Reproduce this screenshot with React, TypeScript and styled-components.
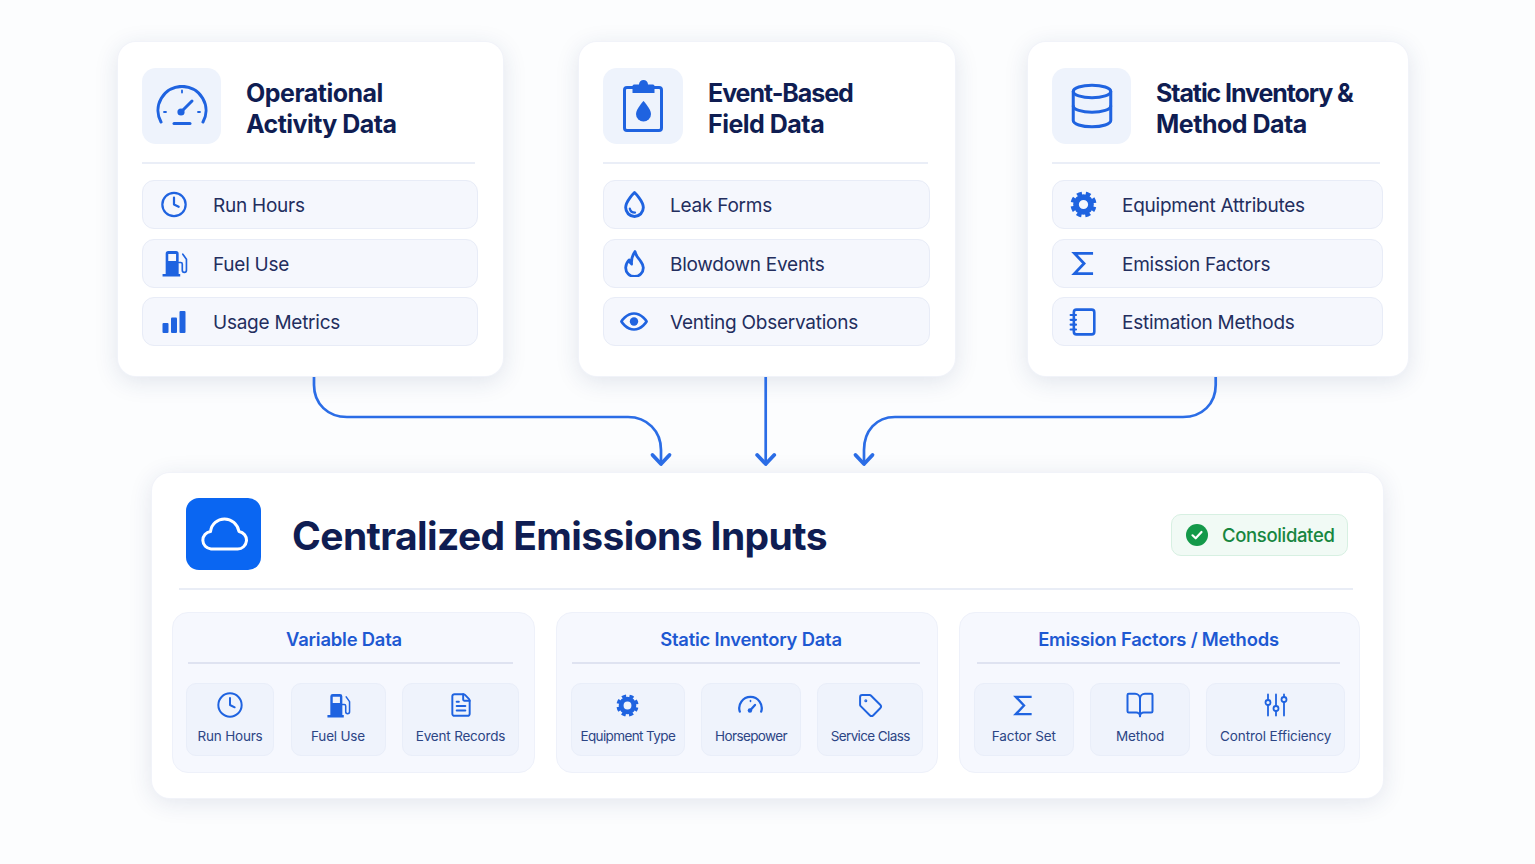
import React from 'react';
import styled, { createGlobalStyle } from 'styled-components';
import { BookOpen, Clock, Database, FileText, Tag } from 'lucide-react';

const blue = '#1f63e0';
const FONT = '"Inter", "Noto Sans", sans-serif';

const GlobalStyle = createGlobalStyle`
  html, body {
    margin: 0;
    background: #fcfdfe;
    font-family: ${FONT};
  }
  * { box-sizing: border-box; }
`;

const Page = styled.div`
  width: 1535px;
  height: 864px;
  padding-top: 42px;
  overflow: hidden;
`;

const TopRow = styled.div`
  display: flex;
  padding-left: 118px;
`;

const SourceCard = styled.section<{ $width: number; $after: number; $padRight: number }>`
  width: ${({ $width }) => $width}px;
  height: 334px;
  margin-right: ${({ $after }) => $after}px;
  padding: 26px ${({ $padRight }) => $padRight}px 0 24px;
  background: #fff;
  border-radius: 18px;
  box-shadow: 0 0 0 1px #f1f3f9, 0 5px 24px rgba(32, 52, 105, 0.13);
`;

const CardHead = styled.div`
  display: flex;
  align-items: center;
  gap: 25px;
  height: 76px;
`;

const IconBox = styled.div<{ $width: number }>`
  display: flex;
  align-items: center;
  justify-content: center;
  width: ${({ $width }) => $width}px;
  height: 76px;
  background: #eef3fc;
  border-radius: 14px;
  color: ${blue};
`;

const CardTitle = styled.h2`
  margin: 0;
  padding-top: 5px;
  font-size: 25px;
  line-height: 31px;
  font-weight: 700;
  letter-spacing: -0.5px;
  color: #0f1d52;
`;

const TitleLine = styled.span<{ $track: number }>`
  display: block;
  letter-spacing: ${({ $track }) => $track}px;
`;

const CardRule = styled.hr<{ $inset: number }>`
  height: 2px;
  margin: 18px ${({ $inset }) => $inset}px 16px 0;
  border: 0;
  background: #eaeef7;
`;

const RowList = styled.div`
  display: flex;
  flex-direction: column;
  gap: 9.5px;
`;

const Row = styled.div<{ $gap: number; $pad: number }>`
  display: flex;
  align-items: center;
  gap: ${({ $gap }) => $gap}px;
  height: 49px;
  padding-left: ${({ $pad }) => $pad}px;
  background: #f5f7fd;
  border: 1px solid #e8ecf7;
  border-radius: 12px;
  font-size: 19px;
  letter-spacing: -0.25px;
  color: #232e5e;
`;

const RowIcon = styled.span`
  display: flex;
  align-items: center;
  justify-content: center;
  width: 28px;
  color: ${blue};
`;

const RowLabel = styled.span`
  padding-top: 2px;
`;

const Arrows = styled.svg`
  display: block;
  width: 1535px;
  height: 97px;
`;

const Hub = styled.section`
  width: 1231px;
  height: 325px;
  margin-left: 152px;
  padding: 25px 23px 0 20px;
  background: #fff;
  border-radius: 18px;
  box-shadow: 0 0 0 1px #f1f3f9, 0 4px 24px rgba(32, 52, 105, 0.12);
`;

const HubHead = styled.div`
  display: flex;
  align-items: center;
  height: 72px;
  padding: 0 12px 0 14px;
`;

const CloudBox = styled.div`
  display: flex;
  align-items: center;
  justify-content: center;
  width: 75px;
  height: 72px;
  margin-right: 31px;
  background: #0a66f2;
  border-radius: 13px;
`;

const HubTitle = styled.h1`
  flex: 1;
  margin: 3px 0 0;
  font-size: 39px;
  font-weight: 700;
  letter-spacing: -0.6px;
  color: #0f1d52;
`;

const Badge = styled.div`
  display: flex;
  align-items: center;
  gap: 14px;
  width: 177px;
  height: 42px;
  margin-top: 2px;
  padding-left: 14px;
  background: #f1faf5;
  border: 1px solid #d7f0e2;
  border-radius: 10px;
  font-size: 18.5px;
  font-weight: 500;
  letter-spacing: -0.35px;
  color: #17863f;
`;

const HubRule = styled.hr`
  height: 2px;
  margin: 18px 7px 22px 7px;
  border: 0;
  background: #e9edf6;
`;

const GroupRow = styled.div`
  display: flex;
  gap: 21px;
`;

const Group = styled.div<{ $width: number; $padLeft: number }>`
  width: ${({ $width }) => $width}px;
  height: 161px;
  padding: 0 14px 0 ${({ $padLeft }) => $padLeft}px;
  background: #f6f8fe;
  border: 1px solid #eef1fa;
  border-radius: 16px;
`;

const GroupTitle = styled.h3<{ $shift: number }>`
  margin: 0;
  height: 49px;
  line-height: 53px;
  text-align: center;
  transform: translateX(${({ $shift }) => $shift}px);
  font-size: 18.4px;
  font-weight: 600;
  letter-spacing: -0.2px;
  color: #1e59d2;
`;

const GroupRule = styled.hr<{ $left: number; $right: number }>`
  height: 2px;
  margin: 0 ${({ $right }) => $right}px 19px ${({ $left }) => $left}px;
  border: 0;
  background: #dfe3f1;
`;

const Tiles = styled.div<{ $track: number }>`
  display: flex;
  gap: 16.5px;
  letter-spacing: ${({ $track }) => $track}px;
`;

const Tile = styled.div<{ $width: number }>`
  display: flex;
  flex-direction: column;
  align-items: center;
  width: ${({ $width }) => $width}px;
  height: 73px;
  padding-top: 7px;
  background: #eff3fc;
  border: 1px solid #e9eef9;
  border-radius: 10px;
  font-size: 13.5px;
  color: #2c4585;
`;

const TileIcon = styled.span`
  display: flex;
  align-items: center;
  justify-content: center;
  height: 28px;
  margin-bottom: 9px;
  color: ${blue};
`;

type IconProps = { size: number };

const Gauge = () => (
  <svg width="52" height="42" viewBox="0 0 52 42" fill="none" stroke={blue} strokeWidth="3" strokeLinecap="round">
    <path d="M5 37A24 24 0 1 1 47 37" />
    <path d="M26 5.5v2M8 27h2M42 27h2" strokeWidth="1.8" />
    <path d="M26 26 36 16" strokeWidth="3" />
    <circle cx="25" cy="27" r="3.6" fill={blue} stroke="none" />
    <path d="M18 38.5h16" />
  </svg>
);

const SmallGauge = ({ size }: IconProps) => (
  <svg width={size} height={size} viewBox="0 0 24 24" fill="none" stroke={blue} strokeWidth="2" strokeLinecap="round">
    <path d="M2.5 17.5A10 10 0 1 1 21.5 17.5" />
    <path d="M12 7.5v1" strokeWidth="1.4" />
    <path d="M12 16 16 11.5" />
    <circle cx="11.5" cy="16.5" r="2" fill={blue} stroke="none" />
  </svg>
);

const ClipDrop = () => (
  <svg width="44" height="54" viewBox="0 0 44 54" fill="none">
    <rect x="3.5" y="8.5" width="37" height="43" rx="2.5" stroke={blue} strokeWidth="3" />
    <path d="M13 5.5h5a4.5 4.5 0 0 1 9 0h5a1.5 1.5 0 0 1 1.5 1.5v7h-22V7a1.5 1.5 0 0 1 1.5-1.5Z" fill={blue} />
    <path d="M22.5 22C22.5 22 15 30 15 35a7.5 7.5 0 0 0 15 0C30 30 22.5 22 22.5 22Z" fill={blue} />
  </svg>
);

const Bars = ({ size }: IconProps) => (
  <svg width={size} height={size} viewBox="0 0 24 24" fill={blue}>
    <rect x="0.5" y="13" width="6" height="10" rx="1" />
    <rect x="9" y="7.5" width="6" height="15.5" rx="1" />
    <rect x="17.5" y="1" width="6" height="22" rx="1" />
  </svg>
);

const Pump = ({ size }: IconProps) => (
  <svg width={size} height={size} viewBox="0 0 26 26" fill="none">
    <path
      fillRule="evenodd"
      fill={blue}
      d="M4.5 3.5A2.5 2.5 0 0 1 7 1h7.5A2.5 2.5 0 0 1 17 3.5V23h1.5v2.5H1.5V23h3ZM7 3.8h7.5v6.7H7Z"
    />
    <path d="M17 12h2a1.5 1.5 0 0 1 1.5 1.500v6a2 2 0 0 0 4 0V9L21 4" stroke={blue} strokeWidth="1.6" strokeLinecap="round" />
  </svg>
);

const Drop = ({ size }: IconProps) => (
  <svg width={size} height={size} viewBox="0 0 26 26" fill="none" stroke={blue} strokeWidth="2.8" strokeLinecap="round" strokeLinejoin="round">
    <path d="M13 1.500C13 1.500 4.500 9.500 4.500 16a8.500 8.500 0 0 0 17 0C21.500 9.500 13 1.500 13 1.500Z" />
    <path d="M8.500 17c.5 2.500 2.500 3.800 5 3.800" strokeWidth="2.200" />
  </svg>
);

const FlameMark = ({ size }: IconProps) => (
  <svg width={size} height={size} viewBox="0 0 26 26" fill="none" stroke={blue} strokeWidth="2.700" strokeLinejoin="round">
    <path d="M13.500 1.500c.8 4.500 3.500 6.500 5.500 9.500 1.400 2 2.500 3.700 2.500 6a8.500 8.500 0 0 1-17 0c0-3.300 1.700-5.700 3.300-7.500.3 2 1 3.300 2.400 4C9.800 9.800 11 5 13.500 1.500Z" />
  </svg>
);

const Eye = ({ size }: IconProps) => (
  <svg width={size} height={size} viewBox="0 0 30 30" fill="none" stroke={blue} strokeWidth="2.8" strokeLinejoin="round">
    <path d="M1.500 15S6.500 6.500 15 6.500 28.500 15 28.500 15 23.500 23.500 15 23.500 1.500 15 1.500 15Z" />
    <circle cx="15" cy="15" r="4.500" fill={blue} stroke="none" />
  </svg>
);

const Gear = ({ size }: IconProps) => (
  <svg width={size} height={size} viewBox="0 0 26 26" fill="none" stroke={blue}>
    <circle cx="13" cy="13" r="7.200" strokeWidth="5.500" />
    <circle cx="13" cy="13" r="10.500" strokeWidth="4" strokeDasharray="4.700 3.547" strokeDashoffset="2.350" transform="rotate(22.500 13 13)" />
  </svg>
);

const SigmaMark = ({ size }: IconProps) => (
  <svg width={size} height={size} viewBox="0 0 24 24" fill="none" stroke={blue} strokeWidth="2.500">
    <path d="M20.500 3H4l8.500 9L4 21h16.500" />
  </svg>
);

const Notebook = ({ size }: IconProps) => (
  <svg width={size} height={size} viewBox="0 0 26 26" fill="none" stroke={blue} strokeWidth="2.400" strokeLinecap="round">
    <rect x="4.500" y="1.500" width="19" height="23" rx="2.500" />
    <path d="M1.500 6.500h5M1.500 11h5M1.500 15.500h5M1.500 20h5" strokeWidth="2" />
  </svg>
);

const CloudMark = () => (
  <svg width="48" height="34" viewBox="0 0 48 34" fill="none" stroke="#fff" strokeWidth="3" strokeLinejoin="round">
    <path d="M11 32H37.500a8.800 8.800 0 0 0 1.500-17.500C37.500 7 31.500 2 24.500 2 17.500 2 11.500 7 10.500 14.500A8.800 8.800 0 0 0 11 32Z" />
  </svg>
);

const Check = () => (
  <svg width="22" height="22" viewBox="0 0 22 22" fill="none">
    <circle cx="11" cy="11" r="11" fill="#14994a" />
    <path d="M6.500 11.300 9.700 14.300 15.500 8" stroke="#fff" strokeWidth="2.200" strokeLinecap="round" strokeLinejoin="round" />
  </svg>
);

const Sliders = ({ size }: IconProps) => (
  <svg width={size} height={size} viewBox="0 0 24 24" fill="none" stroke={blue} strokeWidth="1.800" strokeLinecap="round">
    <path d="M4 1.500v5.500M4 12v10.500M12 1.500v11M12 18v4.500M20 1.500v2.500M20 9v13.500" />
    <circle cx="4" cy="9.500" r="2.500" />
    <circle cx="12" cy="15.500" r="2.500" />
    <circle cx="20" cy="6.500" r="2.500" />
  </svg>
);

const cards = [
  {
    lines: [{ text: 'Operational', track: -0.5 }, { text: 'Activity Data', track: -0.55 }],
    icon: <Gauge />,
    width: 385,
    after: 76,
    padRight: 25,
    boxWidth: 79,
    ruleInset: 3,
    pad: 17,
    gap: 25,
    rows: [
      { label: 'Run Hours', icon: <Clock size={31} strokeWidth={1.9} /> },
      { label: 'Fuel Use', icon: <Pump size={27} /> },
      { label: 'Usage Metrics', icon: <Bars size={24} /> }
    ]
  },
  {
    lines: [{ text: 'Event-Based', track: -1.05 }, { text: 'Field Data', track: -0.5 }],
    icon: <ClipDrop />,
    width: 376,
    after: 73,
    padRight: 25,
    boxWidth: 80,
    ruleInset: 2,
    pad: 16,
    gap: 22,
    rows: [
      { label: 'Leak Forms', icon: <Drop size={27} /> },
      { label: 'Blowdown Events', icon: <FlameMark size={27} /> },
      { label: 'Venting Observations', icon: <Eye size={31} /> }
    ]
  },
  {
    lines: [{ text: 'Static Inventory &', track: -1.1 }, { text: 'Method Data', track: -0.5 }],
    icon: <Database size={50} strokeWidth={1.45} />,
    width: 380,
    after: 0,
    padRight: 25,
    boxWidth: 79,
    ruleInset: 3,
    pad: 16,
    gap: 25,
    rows: [
      { label: 'Equipment Attributes', icon: <Gear size={27} /> },
      { label: 'Emission Factors', icon: <SigmaMark size={27} /> },
      { label: 'Estimation Methods', icon: <Notebook size={28} /> }
    ]
  }
];

const groups = [
  {
    title: 'Variable Data',
    width: 363,
    padLeft: 13,
    shift: -9,
    ruleLeft: 2,
    ruleRight: 7,
    track: -0.2,
    tiles: [
      { label: 'Run Hours', width: 88, icon: <Clock size={28} strokeWidth={1.7} /> },
      { label: 'Fuel Use', width: 95, icon: <Pump size={25} /> },
      { label: 'Event Records', width: 117, icon: <FileText size={26} strokeWidth={1.8} /> }
    ]
  },
  {
    title: 'Static Inventory Data',
    width: 382,
    padLeft: 14,
    shift: 4,
    ruleLeft: 1,
    ruleRight: 3,
    track: -0.62,
    tiles: [
      { label: 'Equipment Type', width: 114, icon: <Gear size={23} /> },
      { label: 'Horsepower', width: 100, icon: <SmallGauge size={27} /> },
      { label: 'Service Class', width: 106, icon: <Tag size={25} strokeWidth={1.9} /> }
    ]
  },
  {
    title: 'Emission Factors / Methods',
    width: 401,
    padLeft: 14,
    shift: -1,
    ruleLeft: 3,
    ruleRight: 5,
    track: -0.1,
    tiles: [
      { label: 'Factor Set', width: 100, icon: <SigmaMark size={23} /> },
      { label: 'Method', width: 100, icon: <BookOpen size={30} strokeWidth={1.6} /> },
      { label: 'Control Efficiency', width: 139, icon: <Sliders size={24} /> }
    ]
  }
];

const connectors = [
  { line: 'M314 377V385C314 404 328 417 347 417H628C647 417 661 431 661 450V464', head: 'M652.500 455 661 464 669.500 455' },
  { line: 'M765.700 377V464', head: 'M757.200 455 765.700 464 774.200 455' },
  { line: 'M1215.700 377V385C1215.700 404 1202 417 1183 417H895C876 417 864 431 864 450V464', head: 'M855.500 455 864 464 872.500 455' }
];

export default function App() {

  return (
    <Page>
      <GlobalStyle />
      <TopRow>
        {cards.map((card) => (
          <SourceCard key={card.lines[0].text} $width={card.width} $after={card.after} $padRight={card.padRight}>
            <CardHead>
              <IconBox $width={card.boxWidth}>{card.icon}</IconBox>
              <CardTitle>
                {card.lines.map((line) => (
                  <TitleLine key={line.text} $track={line.track}>{line.text}</TitleLine>
                ))}
              </CardTitle>
            </CardHead>
            <CardRule $inset={card.ruleInset} />
            <RowList>
              {card.rows.map((row) => (
                <Row key={row.label} $gap={card.gap} $pad={card.pad}>
                  <RowIcon>{row.icon}</RowIcon>
                  <RowLabel>{row.label}</RowLabel>
                </Row>
              ))}
            </RowList>
          </SourceCard>
        ))}
      </TopRow>

      <Arrows viewBox="0 376 1535 97" fill="none" stroke="#2b6de6" strokeWidth="2.700">
        {connectors.map((item) => (
          <g key={item.line}>
            <path d={item.line} />
            <path d={item.head} strokeWidth="3.800" strokeLinecap="round" strokeLinejoin="round" />
          </g>
        ))}
      </Arrows>

      <Hub>
        <HubHead>
          <CloudBox><CloudMark /></CloudBox>
          <HubTitle>Centralized Emissions Inputs</HubTitle>
          <Badge>
            <Check />
            Consolidated
          </Badge>
        </HubHead>
        <HubRule />
        <GroupRow>
          {groups.map((group) => (
            <Group key={group.title} $width={group.width} $padLeft={group.padLeft}>
              <GroupTitle $shift={group.shift}>{group.title}</GroupTitle>
              <GroupRule $left={group.ruleLeft} $right={group.ruleRight} />
              <Tiles $track={group.track}>
                {group.tiles.map((tile) => (
                  <Tile key={tile.label} $width={tile.width}>
                    <TileIcon>{tile.icon}</TileIcon>
                    {tile.label}
                  </Tile>
                ))}
              </Tiles>
            </Group>
          ))}
        </GroupRow>
      </Hub>
    </Page>
  );

}
